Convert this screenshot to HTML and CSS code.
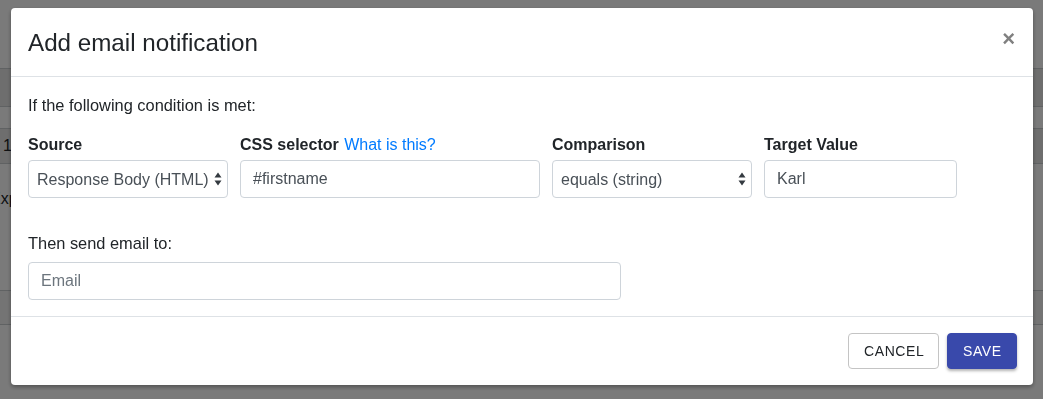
FILE: index.html
```html
<!DOCTYPE html>
<html lang="en">
<head>
  <meta charset="UTF-8" />
  <title>Add email notification</title>
  <link rel="stylesheet" href="styles.css">
</head>
<body>

  <!-- page behind the dialog -->
  <div class="page">
    <div class="page-title">Notification log</div>
    <div class="row row-head"></div>
    <div class="row row-gap"></div>
    <div class="row row-shade"><span>1</span></div>
    <div class="row row-tall"><span>Exp</span></div>
    <div class="row row-foot"></div>
  </div>

  <div class="backdrop"></div>

  <div class="modal">
    <div class="modal-header">
      <h5 class="modal-title">Add email notification</h5>
      <span class="close">&times;</span>
    </div>

    <div class="modal-body">
      <p class="intro">If the following condition is met:</p>

      <div class="condition">
        <div class="field field-source">
          <label>Source</label>
          <div class="select-wrap">
            <select class="control">
              <option>Response Body (HTML)</option>
            </select>
            <svg class="arrows" width="8" height="16" viewBox="0 0 8 16"><path d="M4 1.5 L7.5 6.5 H0.5 Z M4 14.5 L7.5 9.5 H0.5 Z" fill="#343a40"/></svg>
          </div>
        </div>
        <div class="field field-selector">
          <label>CSS selector <a href="#">What is this?</a></label>
          <input class="control" type="text" value="#firstname" />
        </div>
        <div class="field field-compare">
          <label>Comparison</label>
          <div class="select-wrap">
            <select class="control">
              <option>equals (string)</option>
            </select>
            <svg class="arrows" width="8" height="16" viewBox="0 0 8 16"><path d="M4 1.5 L7.5 6.5 H0.5 Z M4 14.5 L7.5 9.5 H0.5 Z" fill="#343a40"/></svg>
          </div>
        </div>
        <div class="field field-target">
          <label>Target Value</label>
          <input class="control" type="text" value="Karl" />
        </div>
      </div>

      <p class="then">Then send email to:</p>
      <input class="control email" type="text" placeholder="Email" />
    </div>

    <div class="modal-footer">
      <button class="btn btn-cancel">Cancel</button>
      <button class="btn btn-save">Save</button>
    </div>
  </div>

</body>
</html>
```

FILE: styles.css
```css
body {
  margin: 0;
  background-color: #fff;
  font-family: 'Liberation Sans', Arial, sans-serif;
  color: #212529;
}

/* page behind */
.page {
  height: 399px;
  overflow: hidden;
}

.page-title {
  height: 68px;
  margin-left: -140px;
  font-size: 20px;
  line-height: 60px;
}

.row {
  border-top: 1px solid #c8ccd0;
  font-size: 16px;
  box-sizing: border-box;
}

.row span {
  margin-left: 2px;
}

.row-head {
  height: 38px;
  background-color: #e6e6e6;
}

.row-gap {
  height: 22px;
}

.row-shade {
  height: 35px;
  line-height: 34px;
  background-color: #e6e6e6;
}

.row-shade span {
  margin-left: 3px;
}

.row-tall {
  height: 127px;
  padding-top: 26px;
}

.row-tall span {
  margin-left: -10px;
}

.row-foot {
  height: 35px;
  background-color: #f2f2f2;
  border-bottom: 1px solid #c8ccd0;
}

.backdrop {
  position: fixed;
  top: 0; left: 0;
  width: 100vw;
  height: 100vh;
  background-color: rgba(0,0,0,0.52);
}

/* Dialog */
.modal {
  position: fixed;
  top: 8px;
  left: 11px;
  width: 1022px;
  background-color: #fff;
  border-radius: 4px;
  box-shadow: 0 2px 4px rgba(0,0,0,0.35);
}

.modal-header {
  display: flex;
  align-items: center;
  justify-content: space-between;
  height: 68px;
  padding: 0 17px;
  border-bottom: 1px solid #dee2e6;
}

.modal-title {
  margin: 0;
  margin-top: 2px;
  font-size: 24.2px;
  font-weight: 400;
  color: #212529;
}

.close {
  font-size: 22px;
  font-weight: 700;
  color: #808080;
  line-height: 1;
  margin-right: 1px;
  margin-top: -6px;
}

.modal-body {
  padding: 16px 17px;
}

.intro,
.then {
  margin: 0;
  font-size: 16.4px;
  line-height: 24px;
}

.intro {
  margin-bottom: 16px;
}

.then {
  margin-top: 33px;
  margin-bottom: 7px;
}

.condition {
  display: flex;
  gap: 12px;
}

.field label {
  display: block;
  font-size: 16px;
  font-weight: 700;
  line-height: 24px;
  margin-bottom: 3px;
}

.field label a {
  font-weight: 400;
  color: #007bff;
  text-decoration: none;
  margin-left: 1px;
}

.field-source { width: 200px; }
.field-selector { width: 300px; }
.field-compare { width: 200px; }
.field-target { width: 193px; }

.control {
  display: block;
  width: 100%;
  height: 38px;
  box-sizing: border-box;
  padding: 0 12px;
  border: 1px solid #ced4da;
  border-radius: 4px;
  background-color: #fff;
  font-family: 'Liberation Sans', Arial, sans-serif;
  font-size: 16px;
  color: #495057;
  outline: none;
}

.control::placeholder {
  color: #6c757d;
}

.select-wrap {
  position: relative;
}

.select-wrap select {
  appearance: none;
  -webkit-appearance: none;
  padding-left: 8px;
}

.arrows {
  position: absolute;
  right: 6px;
  top: 11px;
  pointer-events: none;
}

.email {
  width: 593px;
}

.modal-footer {
  display: flex;
  justify-content: flex-end;
  gap: 8px;
  padding: 16px;
  border-top: 1px solid #dee2e6;
}

.btn {
  height: 36px;
  padding: 0 15px;
  border-radius: 4px;
  font-family: 'Liberation Sans', Arial, sans-serif;
  font-size: 14px;
  letter-spacing: 0.6px;
  text-transform: uppercase;
  cursor: pointer;
}

.btn-cancel {
  width: 91px;
  background-color: #fff;
  border: 1px solid #c4c4c4;
  color: #212529;
}

.btn-save {
  width: 70px;
  background-color: #3949ab;
  border: 1px solid #3949ab;
  color: #fff;
  box-shadow: 0 2px 3px rgba(0,0,0,0.3);
}
```
